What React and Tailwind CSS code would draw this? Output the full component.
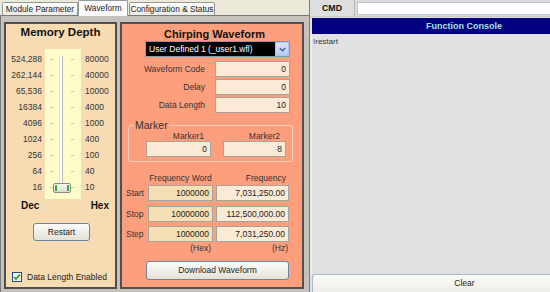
import React from "react";

const decLabels = ["524,288", "262,144", "65,536", "16384", "4096", "1024", "256", "64", "16"];
const hexLabels = ["80000", "40000", "10000", "4000", "1000", "400", "100", "40", "10"];

function Field({ w, value, tan, className = "" }) {
  return (
    <div
      className={`h-[16px] border border-[#a5a39c] ${tan ? "bg-[#f6dfb5]" : "bg-[#fbead6]"} text-right pr-[3px] leading-[14px] text-[8.5px] text-[#222] ${className}`}
      style={{ width: w }}
    >
      {value}
    </div>
  );
}

function MemoryPanel() {
  return (
    <div className="w-[113px] h-full bg-[#f7dcb3] border-2 border-[#4f4f4f] flex flex-col">
      <div className="pt-[1px] h-[14px] leading-[14px] text-center font-bold text-[11.5px] text-[#111]">Memory Depth</div>
      <div className="mt-[11px] flex">
        <div className="w-[36px] flex flex-col pt-[2px] text-right text-[8.5px] text-[#333]">
          {decLabels.map((l) => (
            <div key={l} className="h-[16px] leading-[16px]">{l}</div>
          ))}
        </div>
        <div className="ml-[3px] w-[36px] bg-[#fefcc9] relative pt-[2px] pb-[4px]">
          {decLabels.map((l) => (
            <div key={l} className="h-[16px] flex items-center">
              <div className="ml-[5px] w-[3px] h-px bg-[#c8c4a8]" />
              <div className="ml-[18px] w-[3px] h-px bg-[#c8c4a8]" />
            </div>
          ))}
          <div className="absolute left-[14px] top-[7px] bottom-[12px] w-[4px] bg-[#ffffff] border-r border-[#b8b8b0] border-l border-l-[#e0e0d8]" />
          <div className="absolute left-[8px] top-[134px] w-[18px] h-[10px] rounded-[2px] border border-[#8c8c84] bg-linear-to-b from-[#fafaf6] to-[#dcdad0] flex justify-between px-[1px] py-[1px]">
            <div className="w-[2px] h-full bg-[#2fb52f]" />
            <div className="w-[2px] h-full bg-[#2fb52f]" />
          </div>
        </div>
        <div className="ml-[4px] flex flex-col pt-[2px] text-[8.5px] text-[#333]">
          {hexLabels.map((l) => (
            <div key={l} className="h-[16px] leading-[16px]">{l}</div>
          ))}
        </div>
      </div>
      <div className="mt-[1px] h-[12px] leading-[12px] flex justify-between pl-[15px] pr-[6px] font-bold text-[10px] text-[#111]">
        <span>Dec</span>
        <span>Hex</span>
      </div>
      <div className="mt-[11px] ml-[27px] w-[57px] h-[18px] rounded-[3px] border border-[#6d84a3] bg-linear-to-b from-[#fdfdfb] to-[#e4e1d6] text-center leading-[16px] text-[8.5px] text-[#222]">
        Restart
      </div>
      <div className="mt-auto mb-[5px] ml-[6px] flex items-center">
        <div className="w-[10px] h-[10px] border border-[#1c5180] bg-[#f4f4ee] flex items-center justify-center">
          <svg width="8" height="8" viewBox="0 0 8 8">
            <path d="M1 4 L3 6 L7 1.5" stroke="#21a121" strokeWidth="1.6" fill="none" />
          </svg>
        </div>
        <span className="ml-[5px] text-[8.5px] leading-[10px] text-[#222]">Data Length Enabled</span>
      </div>
    </div>
  );
}

function ChirpPanel() {
  const rows = [
    ["Waveform Code", "0"],
    ["Delay", "0"],
    ["Data Length", "10"],
  ];
  const freq = [
    ["Start", "1000000", "7,031,250.00", ""],
    ["Stop", "10000000", "112,500,000.00", "mt-[5px]"],
    ["Step", "1000000", "7,031,250.00", "mt-[4px]"],
  ];
  return (
    <div className="w-[184px] h-full bg-[#fd9f7c] border-2 border-[#4f4f4f] flex flex-col text-[#222]">
      <div className="pt-[3px] h-[16px] leading-[14px] text-center font-bold text-[11px] text-[#111] pl-[5px]">Chirping Waveform</div>
      <div className="mt-[1px] ml-[23px] w-[145px] h-[16px] bg-black border border-[#7f9db9] flex items-center">
        <span className="flex-1 text-white text-[8.5px] pl-[3px] leading-[14px]">User Defined 1 (_user1.wfl)</span>
        <div className="w-[14px] h-[14px] bg-linear-to-b from-[#dbe6fc] to-[#b6cbf3] border border-[#b0c4ec] flex items-center justify-center">
          <svg width="7" height="5" viewBox="0 0 7 5">
            <path d="M0.8 1 L3.5 3.8 L6.2 1" stroke="#4d6185" strokeWidth="1.4" fill="none" />
          </svg>
        </div>
      </div>
      <div className="mt-[4px] flex flex-col gap-[2px]">
        {rows.map(([l, v]) => (
          <div key={l} className="flex items-center">
            <div className="w-[83px] text-right text-[8.5px] text-[#333]">{l}</div>
            <Field w={75} value={v} className="ml-[10px]" />
          </div>
        ))}
      </div>
      <fieldset className="mt-[6px] ml-[6px] w-[165px] border border-[#f7cdb8] rounded-[3px] pb-[4px]">
        <legend className="ml-[5px] px-[1px] text-[10.5px] leading-[12px] text-[#333]">Marker</legend>
        <div className="flex ml-[17px] h-[10px] leading-[10px] text-[8.5px] text-[#333]">
          <div className="w-[65px] text-right pr-[7px]">Marker1</div>
          <div className="ml-[12px] w-[63px] text-right pr-[6px]">Marker2</div>
        </div>
        <div className="flex ml-[17px]">
          <Field w={65} value="0" />
          <Field w={63} value="8" className="ml-[12px]" />
        </div>
      </fieldset>
      <div className="mt-[11px] flex h-[10px] leading-[10px] text-[8.5px] text-[#333]">
        <div className="ml-[26px] w-[65px] text-center">Frequency Word</div>
        <div className="ml-[3px] w-[73px] text-right pr-[3px]">Frequency</div>
      </div>
      <div className="mt-[2px] flex flex-col">
        {freq.map(([l, a, b, m]) => (
          <div key={l} className={`flex items-center ${m}`}>
            <div className="ml-[4px] w-[22px] text-[8.5px] text-[#333]">{l}</div>
            <Field w={65} value={a} tan />
            <Field w={73} value={b} className="ml-[3px]" />
          </div>
        ))}
      </div>
      <div className="mt-[1px] flex h-[10px] leading-[10px] text-[8.5px] text-[#333]">
        <div className="ml-[26px] w-[65px] text-right pr-[2px]">(Hex)</div>
        <div className="ml-[3px] w-[73px] text-right pr-[1px]">(Hz)</div>
      </div>
      <div className="mt-[8px] ml-[24px] w-[143px] h-[19px] rounded-[3px] border border-[#6d84a3] bg-linear-to-b from-[#fdfdfb] to-[#e4e1d6] text-center leading-[17px] text-[8.5px] text-[#222]">
        Download Waveform
      </div>
    </div>
  );
}

export default function App() {
  return (
    <div className="w-[550px] h-[292px] flex overflow-hidden bg-[#ece9d8] font-['Liberation_Sans',Arial,sans-serif]">
      <div className="w-[310px] h-full flex flex-col border-r border-[#7d7d7d]">
        <div className="h-[15px] flex items-end pl-[2px] bg-[#ece9d8] text-[8.3px] text-[#222]">
          <div className="w-[76px] h-[13px] border border-b-0 border-[#919b9c] rounded-t-[2px] bg-linear-to-b from-[#fefefe] to-[#ecebe5] leading-[12px] text-center">
            Module Parameter
          </div>
          <div className="relative z-10 -mb-px w-[50px] h-[16px] border border-b-0 border-[#919b9c] rounded-t-[2px] bg-[#fcfcfe] leading-[14px] text-center">
            Waveform
          </div>
          <div className="ml-[1px] w-[86px] h-[13px] border border-b-0 border-[#919b9c] rounded-t-[2px] bg-linear-to-b from-[#fefefe] to-[#ecebe5] leading-[12px] text-center">
            Configuration &amp; Status
          </div>
        </div>
        <div className="flex-1 min-h-0 bg-[#c5c2bb] border-t border-l border-[#7a7a7a] flex gap-[3px] pl-[3px] pt-[6px] pb-[3px]">
          <MemoryPanel />
          <ChirpPanel />
        </div>
      </div>
      <div className="flex-1 h-full flex flex-col bg-[#e1e1e1] overflow-hidden">
        <div className="h-[17px] flex bg-[#dcdcdc] border-b border-[#c8c8c8]">
          <div className="w-[45px] h-full border-r border-[#b4b4b4] bg-[#dedede] text-center font-bold text-[8.8px] leading-[17px] text-[#111]">
            CMD
          </div>
          <div className="ml-[2px] mt-[2px] flex-1 h-[13px] bg-white border border-[#b7c7d7] border-r-0" />
        </div>
        <div className="ml-[2px] mt-[1px] h-[16px] bg-[#000080] pl-[66px] text-center font-bold text-[9px] leading-[16px] text-[#a8e0e0]">
          Function Console
        </div>
        <div className="flex-1 ml-[1px] border-l border-[#f4f4f4] pl-[1px] pt-[3px] text-[8px] leading-[10px] text-[#333]">
          !restart
        </div>
        <div className="ml-[2px] h-[18px] rounded-tl-[3px] border-t border-l border-[#a6b8cc] bg-linear-to-b from-[#fbfbf8] to-[#efeee8] pl-[66px] text-center text-[8.5px] leading-[17px] text-[#222]">
          Clear
        </div>
      </div>
    </div>
  );
}
